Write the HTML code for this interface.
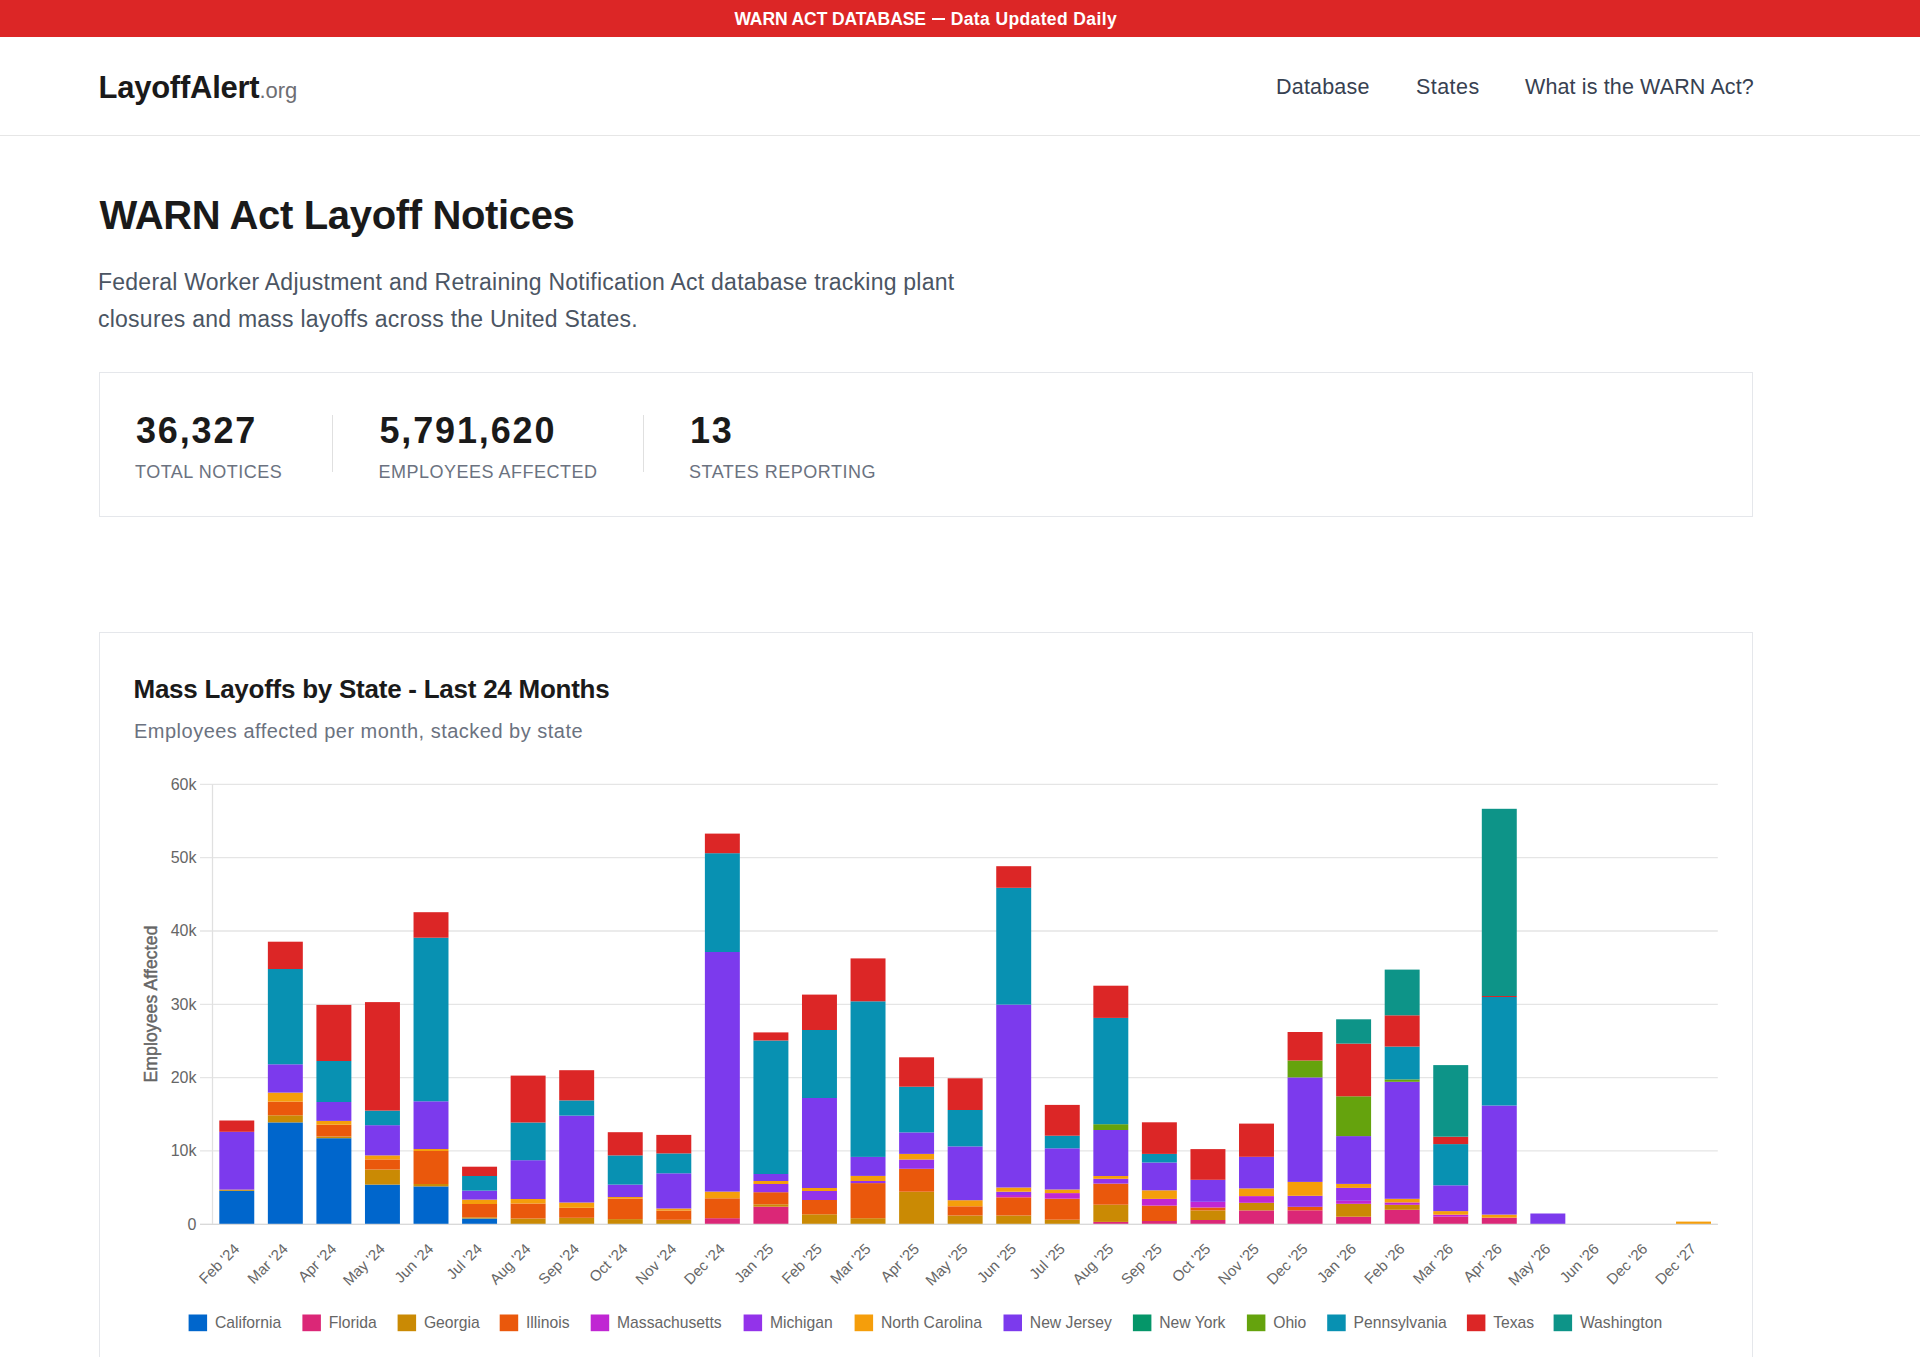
<!DOCTYPE html>
<html><head><meta charset="utf-8"><title>WARN Act Layoff Notices</title>
<style>
html,body{margin:0;padding:0;background:#fff;}
body{width:1920px;height:1357px;overflow:hidden;position:relative;font-family:"Liberation Sans",sans-serif;}
.a{position:absolute;white-space:nowrap;line-height:1;}
#topbar{position:absolute;left:0;top:0;width:1920px;height:37px;background:#dc2626;}
#topbar span{position:absolute;top:11.1px;color:#fff;font-weight:bold;font-size:17.5px;letter-spacing:0.1px;line-height:1;}
#navline{position:absolute;left:0;top:135px;width:1920px;height:1px;background:#e6e6e6;}
.logo{left:98.5px;top:71.6px;font-size:31px;font-weight:bold;color:#1a1a1a;letter-spacing:-0.25px;}
.logo small{font-size:22px;font-weight:normal;color:#6e6e73;letter-spacing:0;}
.nav{top:76.8px;font-size:21.5px;color:#374151;letter-spacing:0.2px;}
h1{margin:0;left:99.5px;top:194.8px;font-size:40px;font-weight:bold;color:#1a1a1a;letter-spacing:-0.35px;}
.lead{left:98px;top:264px;font-size:23px;line-height:37.1px;color:#4b5563;letter-spacing:0.24px;white-space:normal;width:900px;}
.box{position:absolute;left:98.5px;width:1654px;border:1px solid #e5e7eb;box-sizing:border-box;}
.num{font-size:36px;font-weight:bold;color:#1a1a1a;letter-spacing:1.85px;}
.lab{font-size:18px;color:#6b7280;letter-spacing:0.5px;}
.div{position:absolute;width:1px;background:#e0e0e0;top:415px;height:57px;}
.ct{left:133.5px;top:676.3px;font-size:26px;font-weight:bold;color:#1a1a1a;letter-spacing:-0.25px;}
.cs{left:134px;top:721px;font-size:20px;color:#6b7280;letter-spacing:0.49px;}
svg{position:absolute;left:0;top:0;}
.tk{font-family:"Liberation Sans",sans-serif;font-size:16px;fill:#666;}
.xl{font-family:"Liberation Sans",sans-serif;font-size:15px;fill:#666;}
.yt{font-family:"Liberation Sans",sans-serif;font-size:17.5px;fill:#666;stroke:#666;stroke-width:0.45px;letter-spacing:0.15px;}
.lg{font-family:"Liberation Sans",sans-serif;font-size:15.7px;fill:#666;}
</style></head>
<body>
<div id="topbar"><span style="left:734.4px;width:auto;letter-spacing:-0.1px">WARN ACT DATABASE</span><i style="position:absolute;left:931.7px;top:18.3px;width:13.6px;height:2.1px;background:#fff"></i><span style="left:950.7px;width:auto;letter-spacing:0.38px">Data Updated Daily</span></div>
<div class="a logo">LayoffAlert<small>.org</small></div>
<div class="a nav" style="left:1276px">Database</div>
<div class="a nav" style="left:1416px;letter-spacing:0.45px">States</div>
<div class="a nav" style="left:1525px;letter-spacing:0.13px">What is the WARN Act?</div>
<div id="navline"></div>
<h1 class="a">WARN Act Layoff Notices</h1>
<div class="a lead">Federal Worker Adjustment and Retraining Notification Act database tracking plant<br>closures and mass layoffs across the United States.</div>
<div class="box" style="top:372px;height:145px;"></div>
<div class="a num" style="left:136px;top:413.2px">36,327</div>
<div class="a lab" style="left:135px;top:463.4px">TOTAL NOTICES</div>
<div class="div" style="left:332px"></div>
<div class="a num" style="left:379.5px;top:413.2px">5,791,620</div>
<div class="a lab" style="left:378.5px;top:463.4px">EMPLOYEES AFFECTED</div>
<div class="div" style="left:643px"></div>
<div class="a num" style="left:690px;top:413.2px">13</div>
<div class="a lab" style="left:689px;top:463.4px">STATES REPORTING</div>
<div class="box" style="top:632px;height:800px;"></div>
<div class="a ct">Mass Layoffs by State - Last 24 Months</div>
<div class="a cs">Employees affected per month, stacked by state</div>
<svg width="1920" height="1357" viewBox="0 0 1920 1357">
<line x1="200" y1="1224.30" x2="1717.8" y2="1224.30" stroke="#e5e5e5" stroke-width="1.3"/>
<line x1="200" y1="1150.97" x2="1717.8" y2="1150.97" stroke="#e5e5e5" stroke-width="1.3"/>
<line x1="200" y1="1077.64" x2="1717.8" y2="1077.64" stroke="#e5e5e5" stroke-width="1.3"/>
<line x1="200" y1="1004.31" x2="1717.8" y2="1004.31" stroke="#e5e5e5" stroke-width="1.3"/>
<line x1="200" y1="930.98" x2="1717.8" y2="930.98" stroke="#e5e5e5" stroke-width="1.3"/>
<line x1="200" y1="857.65" x2="1717.8" y2="857.65" stroke="#e5e5e5" stroke-width="1.3"/>
<line x1="200" y1="784.32" x2="1717.8" y2="784.32" stroke="#e5e5e5" stroke-width="1.3"/>
<line x1="212.5" y1="784.30" x2="212.5" y2="1224.30" stroke="#e0e0e0" stroke-width="1.3"/>
<text x="196.5" y="1229.70" text-anchor="end" class="tk">0</text>
<text x="196.5" y="1156.37" text-anchor="end" class="tk">10k</text>
<text x="196.5" y="1083.04" text-anchor="end" class="tk">20k</text>
<text x="196.5" y="1009.71" text-anchor="end" class="tk">30k</text>
<text x="196.5" y="936.38" text-anchor="end" class="tk">40k</text>
<text x="196.5" y="863.05" text-anchor="end" class="tk">50k</text>
<text x="196.5" y="789.72" text-anchor="end" class="tk">60k</text>
<rect x="219.30" y="1190.80" width="34.96" height="33.50" fill="#0066cc"/>
<rect x="219.30" y="1189.60" width="34.96" height="1.20" fill="#ca8a04"/>
<rect x="219.30" y="1131.80" width="34.96" height="57.80" fill="#7c3aed"/>
<rect x="219.30" y="1120.50" width="34.96" height="11.30" fill="#dc2626"/>
<rect x="267.86" y="1122.40" width="34.96" height="101.90" fill="#0066cc"/>
<rect x="267.86" y="1115.30" width="34.96" height="7.10" fill="#ca8a04"/>
<rect x="267.86" y="1101.60" width="34.96" height="13.70" fill="#ea580c"/>
<rect x="267.86" y="1092.60" width="34.96" height="9.00" fill="#f59e0b"/>
<rect x="267.86" y="1064.30" width="34.96" height="28.30" fill="#7c3aed"/>
<rect x="267.86" y="969.00" width="34.96" height="95.30" fill="#0891b2"/>
<rect x="267.86" y="941.70" width="34.96" height="27.30" fill="#dc2626"/>
<rect x="316.41" y="1138.20" width="34.96" height="86.10" fill="#0066cc"/>
<rect x="316.41" y="1136.50" width="34.96" height="1.70" fill="#ca8a04"/>
<rect x="316.41" y="1124.70" width="34.96" height="11.80" fill="#ea580c"/>
<rect x="316.41" y="1120.90" width="34.96" height="3.80" fill="#f59e0b"/>
<rect x="316.41" y="1102.00" width="34.96" height="18.90" fill="#7c3aed"/>
<rect x="316.41" y="1061.00" width="34.96" height="41.00" fill="#0891b2"/>
<rect x="316.41" y="1004.90" width="34.96" height="56.10" fill="#dc2626"/>
<rect x="364.97" y="1184.60" width="34.96" height="39.70" fill="#0066cc"/>
<rect x="364.97" y="1169.50" width="34.96" height="15.10" fill="#ca8a04"/>
<rect x="364.97" y="1159.40" width="34.96" height="10.10" fill="#ea580c"/>
<rect x="364.97" y="1155.40" width="34.96" height="4.00" fill="#f59e0b"/>
<rect x="364.97" y="1125.20" width="34.96" height="30.20" fill="#7c3aed"/>
<rect x="364.97" y="1110.60" width="34.96" height="14.60" fill="#0891b2"/>
<rect x="364.97" y="1002.10" width="34.96" height="108.50" fill="#dc2626"/>
<rect x="413.53" y="1186.40" width="34.96" height="37.90" fill="#0066cc"/>
<rect x="413.53" y="1184.00" width="34.96" height="2.40" fill="#ca8a04"/>
<rect x="413.53" y="1151.00" width="34.96" height="33.00" fill="#ea580c"/>
<rect x="413.53" y="1149.00" width="34.96" height="2.00" fill="#f59e0b"/>
<rect x="413.53" y="1101.30" width="34.96" height="47.70" fill="#7c3aed"/>
<rect x="413.53" y="937.70" width="34.96" height="163.60" fill="#0891b2"/>
<rect x="413.53" y="912.20" width="34.96" height="25.50" fill="#dc2626"/>
<rect x="462.09" y="1218.50" width="34.96" height="5.80" fill="#0066cc"/>
<rect x="462.09" y="1217.30" width="34.96" height="1.20" fill="#ca8a04"/>
<rect x="462.09" y="1204.00" width="34.96" height="13.30" fill="#ea580c"/>
<rect x="462.09" y="1199.60" width="34.96" height="4.40" fill="#f59e0b"/>
<rect x="462.09" y="1190.60" width="34.96" height="9.00" fill="#7c3aed"/>
<rect x="462.09" y="1176.00" width="34.96" height="14.60" fill="#0891b2"/>
<rect x="462.09" y="1166.70" width="34.96" height="9.30" fill="#dc2626"/>
<rect x="510.65" y="1218.50" width="34.96" height="5.80" fill="#ca8a04"/>
<rect x="510.65" y="1203.50" width="34.96" height="15.00" fill="#ea580c"/>
<rect x="510.65" y="1199.00" width="34.96" height="4.50" fill="#f59e0b"/>
<rect x="510.65" y="1160.20" width="34.96" height="38.80" fill="#7c3aed"/>
<rect x="510.65" y="1122.50" width="34.96" height="37.70" fill="#0891b2"/>
<rect x="510.65" y="1075.60" width="34.96" height="46.90" fill="#dc2626"/>
<rect x="559.20" y="1217.80" width="34.96" height="6.50" fill="#ca8a04"/>
<rect x="559.20" y="1207.80" width="34.96" height="10.00" fill="#ea580c"/>
<rect x="559.20" y="1202.50" width="34.96" height="5.30" fill="#f59e0b"/>
<rect x="559.20" y="1115.60" width="34.96" height="86.90" fill="#7c3aed"/>
<rect x="559.20" y="1100.40" width="34.96" height="15.20" fill="#0891b2"/>
<rect x="559.20" y="1070.20" width="34.96" height="30.20" fill="#dc2626"/>
<rect x="607.76" y="1219.10" width="34.96" height="5.20" fill="#ca8a04"/>
<rect x="607.76" y="1198.50" width="34.96" height="20.60" fill="#ea580c"/>
<rect x="607.76" y="1197.00" width="34.96" height="1.50" fill="#f59e0b"/>
<rect x="607.76" y="1184.60" width="34.96" height="12.40" fill="#7c3aed"/>
<rect x="607.76" y="1155.40" width="34.96" height="29.20" fill="#0891b2"/>
<rect x="607.76" y="1132.20" width="34.96" height="23.20" fill="#dc2626"/>
<rect x="656.32" y="1219.80" width="34.96" height="4.50" fill="#ca8a04"/>
<rect x="656.32" y="1210.50" width="34.96" height="9.30" fill="#ea580c"/>
<rect x="656.32" y="1208.50" width="34.96" height="2.00" fill="#f59e0b"/>
<rect x="656.32" y="1173.30" width="34.96" height="35.20" fill="#7c3aed"/>
<rect x="656.32" y="1153.40" width="34.96" height="19.90" fill="#0891b2"/>
<rect x="656.32" y="1134.90" width="34.96" height="18.50" fill="#dc2626"/>
<rect x="704.88" y="1218.20" width="34.96" height="6.10" fill="#db2777"/>
<rect x="704.88" y="1198.30" width="34.96" height="19.90" fill="#ea580c"/>
<rect x="704.88" y="1191.60" width="34.96" height="6.70" fill="#f59e0b"/>
<rect x="704.88" y="952.00" width="34.96" height="239.60" fill="#7c3aed"/>
<rect x="704.88" y="853.20" width="34.96" height="98.80" fill="#0891b2"/>
<rect x="704.88" y="833.60" width="34.96" height="19.60" fill="#dc2626"/>
<rect x="753.44" y="1206.70" width="34.96" height="17.60" fill="#db2777"/>
<rect x="753.44" y="1204.30" width="34.96" height="2.40" fill="#ca8a04"/>
<rect x="753.44" y="1192.20" width="34.96" height="12.10" fill="#ea580c"/>
<rect x="753.44" y="1184.00" width="34.96" height="8.20" fill="#9333ea"/>
<rect x="753.44" y="1181.00" width="34.96" height="3.00" fill="#f59e0b"/>
<rect x="753.44" y="1174.00" width="34.96" height="7.00" fill="#7c3aed"/>
<rect x="753.44" y="1040.50" width="34.96" height="133.50" fill="#0891b2"/>
<rect x="753.44" y="1032.40" width="34.96" height="8.10" fill="#dc2626"/>
<rect x="801.99" y="1214.30" width="34.96" height="10.00" fill="#ca8a04"/>
<rect x="801.99" y="1200.00" width="34.96" height="14.30" fill="#ea580c"/>
<rect x="801.99" y="1191.00" width="34.96" height="9.00" fill="#9333ea"/>
<rect x="801.99" y="1188.00" width="34.96" height="3.00" fill="#f59e0b"/>
<rect x="801.99" y="1098.00" width="34.96" height="90.00" fill="#7c3aed"/>
<rect x="801.99" y="1030.00" width="34.96" height="68.00" fill="#0891b2"/>
<rect x="801.99" y="994.60" width="34.96" height="35.40" fill="#dc2626"/>
<rect x="850.55" y="1218.20" width="34.96" height="6.10" fill="#ca8a04"/>
<rect x="850.55" y="1183.10" width="34.96" height="35.10" fill="#ea580c"/>
<rect x="850.55" y="1181.00" width="34.96" height="2.10" fill="#9333ea"/>
<rect x="850.55" y="1175.90" width="34.96" height="5.10" fill="#f59e0b"/>
<rect x="850.55" y="1156.90" width="34.96" height="19.00" fill="#7c3aed"/>
<rect x="850.55" y="1001.30" width="34.96" height="155.60" fill="#0891b2"/>
<rect x="850.55" y="958.40" width="34.96" height="42.90" fill="#dc2626"/>
<rect x="899.11" y="1191.70" width="34.96" height="32.60" fill="#ca8a04"/>
<rect x="899.11" y="1168.80" width="34.96" height="22.90" fill="#ea580c"/>
<rect x="899.11" y="1159.50" width="34.96" height="9.30" fill="#9333ea"/>
<rect x="899.11" y="1153.90" width="34.96" height="5.60" fill="#f59e0b"/>
<rect x="899.11" y="1132.40" width="34.96" height="21.50" fill="#7c3aed"/>
<rect x="899.11" y="1086.70" width="34.96" height="45.70" fill="#0891b2"/>
<rect x="899.11" y="1057.30" width="34.96" height="29.40" fill="#dc2626"/>
<rect x="947.67" y="1215.50" width="34.96" height="8.80" fill="#ca8a04"/>
<rect x="947.67" y="1206.30" width="34.96" height="9.20" fill="#ea580c"/>
<rect x="947.67" y="1200.20" width="34.96" height="6.10" fill="#f59e0b"/>
<rect x="947.67" y="1146.40" width="34.96" height="53.80" fill="#7c3aed"/>
<rect x="947.67" y="1110.00" width="34.96" height="36.40" fill="#0891b2"/>
<rect x="947.67" y="1078.30" width="34.96" height="31.70" fill="#dc2626"/>
<rect x="996.23" y="1215.50" width="34.96" height="8.80" fill="#ca8a04"/>
<rect x="996.23" y="1197.30" width="34.96" height="18.20" fill="#ea580c"/>
<rect x="996.23" y="1195.00" width="34.96" height="2.30" fill="#c026d3"/>
<rect x="996.23" y="1191.70" width="34.96" height="3.30" fill="#9333ea"/>
<rect x="996.23" y="1187.50" width="34.96" height="4.20" fill="#f59e0b"/>
<rect x="996.23" y="1004.60" width="34.96" height="182.90" fill="#7c3aed"/>
<rect x="996.23" y="887.80" width="34.96" height="116.80" fill="#0891b2"/>
<rect x="996.23" y="866.20" width="34.96" height="21.60" fill="#dc2626"/>
<rect x="1044.79" y="1219.70" width="34.96" height="4.60" fill="#ca8a04"/>
<rect x="1044.79" y="1198.70" width="34.96" height="21.00" fill="#ea580c"/>
<rect x="1044.79" y="1193.10" width="34.96" height="5.60" fill="#c026d3"/>
<rect x="1044.79" y="1189.50" width="34.96" height="3.60" fill="#f59e0b"/>
<rect x="1044.79" y="1148.30" width="34.96" height="41.20" fill="#7c3aed"/>
<rect x="1044.79" y="1135.70" width="34.96" height="12.60" fill="#0891b2"/>
<rect x="1044.79" y="1104.90" width="34.96" height="30.80" fill="#dc2626"/>
<rect x="1093.34" y="1221.90" width="34.96" height="2.40" fill="#db2777"/>
<rect x="1093.34" y="1204.70" width="34.96" height="17.20" fill="#ca8a04"/>
<rect x="1093.34" y="1183.60" width="34.96" height="21.10" fill="#ea580c"/>
<rect x="1093.34" y="1178.80" width="34.96" height="4.80" fill="#9333ea"/>
<rect x="1093.34" y="1176.00" width="34.96" height="2.80" fill="#f59e0b"/>
<rect x="1093.34" y="1130.00" width="34.96" height="46.00" fill="#7c3aed"/>
<rect x="1093.34" y="1124.20" width="34.96" height="5.80" fill="#65a30d"/>
<rect x="1093.34" y="1017.90" width="34.96" height="106.30" fill="#0891b2"/>
<rect x="1093.34" y="985.70" width="34.96" height="32.20" fill="#dc2626"/>
<rect x="1141.90" y="1221.00" width="34.96" height="3.30" fill="#db2777"/>
<rect x="1141.90" y="1205.60" width="34.96" height="15.40" fill="#ea580c"/>
<rect x="1141.90" y="1198.90" width="34.96" height="6.70" fill="#c026d3"/>
<rect x="1141.90" y="1190.30" width="34.96" height="8.60" fill="#f59e0b"/>
<rect x="1141.90" y="1162.50" width="34.96" height="27.80" fill="#7c3aed"/>
<rect x="1141.90" y="1153.90" width="34.96" height="8.60" fill="#0891b2"/>
<rect x="1141.90" y="1122.30" width="34.96" height="31.60" fill="#dc2626"/>
<rect x="1190.46" y="1220.00" width="34.96" height="4.30" fill="#db2777"/>
<rect x="1190.46" y="1210.40" width="34.96" height="9.60" fill="#ca8a04"/>
<rect x="1190.46" y="1207.50" width="34.96" height="2.90" fill="#ea580c"/>
<rect x="1190.46" y="1201.80" width="34.96" height="5.70" fill="#c026d3"/>
<rect x="1190.46" y="1179.80" width="34.96" height="22.00" fill="#7c3aed"/>
<rect x="1190.46" y="1149.10" width="34.96" height="30.70" fill="#dc2626"/>
<rect x="1239.02" y="1210.40" width="34.96" height="13.90" fill="#db2777"/>
<rect x="1239.02" y="1202.80" width="34.96" height="7.60" fill="#ca8a04"/>
<rect x="1239.02" y="1196.10" width="34.96" height="6.70" fill="#c026d3"/>
<rect x="1239.02" y="1188.40" width="34.96" height="7.70" fill="#f59e0b"/>
<rect x="1239.02" y="1156.80" width="34.96" height="31.60" fill="#7c3aed"/>
<rect x="1239.02" y="1123.60" width="34.96" height="33.20" fill="#dc2626"/>
<rect x="1287.58" y="1210.30" width="34.96" height="14.00" fill="#db2777"/>
<rect x="1287.58" y="1206.80" width="34.96" height="3.50" fill="#ea580c"/>
<rect x="1287.58" y="1195.80" width="34.96" height="11.00" fill="#9333ea"/>
<rect x="1287.58" y="1181.90" width="34.96" height="13.90" fill="#f59e0b"/>
<rect x="1287.58" y="1077.40" width="34.96" height="104.50" fill="#7c3aed"/>
<rect x="1287.58" y="1060.50" width="34.96" height="16.90" fill="#65a30d"/>
<rect x="1287.58" y="1032.00" width="34.96" height="28.50" fill="#dc2626"/>
<rect x="1336.13" y="1216.70" width="34.96" height="7.60" fill="#db2777"/>
<rect x="1336.13" y="1203.80" width="34.96" height="12.90" fill="#ca8a04"/>
<rect x="1336.13" y="1200.80" width="34.96" height="3.00" fill="#c026d3"/>
<rect x="1336.13" y="1187.90" width="34.96" height="12.90" fill="#9333ea"/>
<rect x="1336.13" y="1183.90" width="34.96" height="4.00" fill="#f59e0b"/>
<rect x="1336.13" y="1136.10" width="34.96" height="47.80" fill="#7c3aed"/>
<rect x="1336.13" y="1096.30" width="34.96" height="39.80" fill="#65a30d"/>
<rect x="1336.13" y="1043.60" width="34.96" height="52.70" fill="#dc2626"/>
<rect x="1336.13" y="1019.30" width="34.96" height="24.30" fill="#0d9488"/>
<rect x="1384.69" y="1209.80" width="34.96" height="14.50" fill="#db2777"/>
<rect x="1384.69" y="1204.80" width="34.96" height="5.00" fill="#ca8a04"/>
<rect x="1384.69" y="1202.40" width="34.96" height="2.40" fill="#c026d3"/>
<rect x="1384.69" y="1198.80" width="34.96" height="3.60" fill="#f59e0b"/>
<rect x="1384.69" y="1081.80" width="34.96" height="117.00" fill="#7c3aed"/>
<rect x="1384.69" y="1079.40" width="34.96" height="2.40" fill="#65a30d"/>
<rect x="1384.69" y="1046.60" width="34.96" height="32.80" fill="#0891b2"/>
<rect x="1384.69" y="1015.30" width="34.96" height="31.30" fill="#dc2626"/>
<rect x="1384.69" y="969.60" width="34.96" height="45.70" fill="#0d9488"/>
<rect x="1433.25" y="1216.70" width="34.96" height="7.60" fill="#db2777"/>
<rect x="1433.25" y="1214.70" width="34.96" height="2.00" fill="#c026d3"/>
<rect x="1433.25" y="1211.10" width="34.96" height="3.60" fill="#f59e0b"/>
<rect x="1433.25" y="1185.30" width="34.96" height="25.80" fill="#7c3aed"/>
<rect x="1433.25" y="1144.10" width="34.96" height="41.20" fill="#0891b2"/>
<rect x="1433.25" y="1136.70" width="34.96" height="7.40" fill="#dc2626"/>
<rect x="1433.25" y="1065.10" width="34.96" height="71.60" fill="#0d9488"/>
<rect x="1481.81" y="1217.70" width="34.96" height="6.60" fill="#db2777"/>
<rect x="1481.81" y="1214.60" width="34.96" height="3.10" fill="#f59e0b"/>
<rect x="1481.81" y="1105.50" width="34.96" height="109.10" fill="#7c3aed"/>
<rect x="1481.81" y="997.00" width="34.96" height="108.50" fill="#0891b2"/>
<rect x="1481.81" y="996.00" width="34.96" height="1.00" fill="#dc2626"/>
<rect x="1481.81" y="808.80" width="34.96" height="187.20" fill="#0d9488"/>
<rect x="1530.37" y="1213.50" width="34.96" height="10.80" fill="#7c3aed"/>
<rect x="1676.04" y="1221.60" width="34.96" height="2.70" fill="#f59e0b"/>
<line x1="200" y1="1224.30" x2="1717.8" y2="1224.30" stroke="#d9d9d9" stroke-width="1.3"/>
<text transform="translate(237.48,1247) rotate(-45)" text-anchor="end" dominant-baseline="middle" class="xl">Feb &#39;24</text>
<text transform="translate(286.04,1247) rotate(-45)" text-anchor="end" dominant-baseline="middle" class="xl">Mar &#39;24</text>
<text transform="translate(334.60,1247) rotate(-45)" text-anchor="end" dominant-baseline="middle" class="xl">Apr &#39;24</text>
<text transform="translate(383.15,1247) rotate(-45)" text-anchor="end" dominant-baseline="middle" class="xl">May &#39;24</text>
<text transform="translate(431.71,1247) rotate(-45)" text-anchor="end" dominant-baseline="middle" class="xl">Jun &#39;24</text>
<text transform="translate(480.27,1247) rotate(-45)" text-anchor="end" dominant-baseline="middle" class="xl">Jul &#39;24</text>
<text transform="translate(528.83,1247) rotate(-45)" text-anchor="end" dominant-baseline="middle" class="xl">Aug &#39;24</text>
<text transform="translate(577.39,1247) rotate(-45)" text-anchor="end" dominant-baseline="middle" class="xl">Sep &#39;24</text>
<text transform="translate(625.94,1247) rotate(-45)" text-anchor="end" dominant-baseline="middle" class="xl">Oct &#39;24</text>
<text transform="translate(674.50,1247) rotate(-45)" text-anchor="end" dominant-baseline="middle" class="xl">Nov &#39;24</text>
<text transform="translate(723.06,1247) rotate(-45)" text-anchor="end" dominant-baseline="middle" class="xl">Dec &#39;24</text>
<text transform="translate(771.62,1247) rotate(-45)" text-anchor="end" dominant-baseline="middle" class="xl">Jan &#39;25</text>
<text transform="translate(820.18,1247) rotate(-45)" text-anchor="end" dominant-baseline="middle" class="xl">Feb &#39;25</text>
<text transform="translate(868.73,1247) rotate(-45)" text-anchor="end" dominant-baseline="middle" class="xl">Mar &#39;25</text>
<text transform="translate(917.29,1247) rotate(-45)" text-anchor="end" dominant-baseline="middle" class="xl">Apr &#39;25</text>
<text transform="translate(965.85,1247) rotate(-45)" text-anchor="end" dominant-baseline="middle" class="xl">May &#39;25</text>
<text transform="translate(1014.41,1247) rotate(-45)" text-anchor="end" dominant-baseline="middle" class="xl">Jun &#39;25</text>
<text transform="translate(1062.97,1247) rotate(-45)" text-anchor="end" dominant-baseline="middle" class="xl">Jul &#39;25</text>
<text transform="translate(1111.52,1247) rotate(-45)" text-anchor="end" dominant-baseline="middle" class="xl">Aug &#39;25</text>
<text transform="translate(1160.08,1247) rotate(-45)" text-anchor="end" dominant-baseline="middle" class="xl">Sep &#39;25</text>
<text transform="translate(1208.64,1247) rotate(-45)" text-anchor="end" dominant-baseline="middle" class="xl">Oct &#39;25</text>
<text transform="translate(1257.20,1247) rotate(-45)" text-anchor="end" dominant-baseline="middle" class="xl">Nov &#39;25</text>
<text transform="translate(1305.76,1247) rotate(-45)" text-anchor="end" dominant-baseline="middle" class="xl">Dec &#39;25</text>
<text transform="translate(1354.31,1247) rotate(-45)" text-anchor="end" dominant-baseline="middle" class="xl">Jan &#39;26</text>
<text transform="translate(1402.87,1247) rotate(-45)" text-anchor="end" dominant-baseline="middle" class="xl">Feb &#39;26</text>
<text transform="translate(1451.43,1247) rotate(-45)" text-anchor="end" dominant-baseline="middle" class="xl">Mar &#39;26</text>
<text transform="translate(1499.99,1247) rotate(-45)" text-anchor="end" dominant-baseline="middle" class="xl">Apr &#39;26</text>
<text transform="translate(1548.55,1247) rotate(-45)" text-anchor="end" dominant-baseline="middle" class="xl">May &#39;26</text>
<text transform="translate(1597.10,1247) rotate(-45)" text-anchor="end" dominant-baseline="middle" class="xl">Jun &#39;26</text>
<text transform="translate(1645.66,1247) rotate(-45)" text-anchor="end" dominant-baseline="middle" class="xl">Dec &#39;26</text>
<text transform="translate(1694.22,1247) rotate(-45)" text-anchor="end" dominant-baseline="middle" class="xl">Dec &#39;27</text>
<text transform="translate(157,1004) rotate(-90)" text-anchor="middle" class="yt">Employees Affected</text>
<rect x="188.6" y="1314.5" width="18.5" height="16.7" fill="#0066cc"/>
<text x="214.9" y="1327.6" class="lg">California</text>
<rect x="302.4" y="1314.5" width="18.5" height="16.7" fill="#db2777"/>
<text x="328.7" y="1327.6" class="lg">Florida</text>
<rect x="397.6" y="1314.5" width="18.5" height="16.7" fill="#ca8a04"/>
<text x="423.9" y="1327.6" class="lg">Georgia</text>
<rect x="499.7" y="1314.5" width="18.5" height="16.7" fill="#ea580c"/>
<text x="526.0" y="1327.6" class="lg">Illinois</text>
<rect x="590.7" y="1314.5" width="18.5" height="16.7" fill="#c026d3"/>
<text x="617.0" y="1327.6" class="lg">Massachusetts</text>
<rect x="743.6" y="1314.5" width="18.5" height="16.7" fill="#9333ea"/>
<text x="769.9" y="1327.6" class="lg">Michigan</text>
<rect x="854.6" y="1314.5" width="18.5" height="16.7" fill="#f59e0b"/>
<text x="880.9" y="1327.6" class="lg">North Carolina</text>
<rect x="1003.5" y="1314.5" width="18.5" height="16.7" fill="#7c3aed"/>
<text x="1029.8" y="1327.6" class="lg">New Jersey</text>
<rect x="1132.9" y="1314.5" width="18.5" height="16.7" fill="#059669"/>
<text x="1159.2" y="1327.6" class="lg">New York</text>
<rect x="1246.9" y="1314.5" width="18.5" height="16.7" fill="#65a30d"/>
<text x="1273.2" y="1327.6" class="lg">Ohio</text>
<rect x="1327.2" y="1314.5" width="18.5" height="16.7" fill="#0891b2"/>
<text x="1353.5" y="1327.6" class="lg">Pennsylvania</text>
<rect x="1466.9" y="1314.5" width="18.5" height="16.7" fill="#dc2626"/>
<text x="1493.2" y="1327.6" class="lg">Texas</text>
<rect x="1553.6" y="1314.5" width="18.5" height="16.7" fill="#0d9488"/>
<text x="1579.9" y="1327.6" class="lg">Washington</text>
</svg>
</body></html>
